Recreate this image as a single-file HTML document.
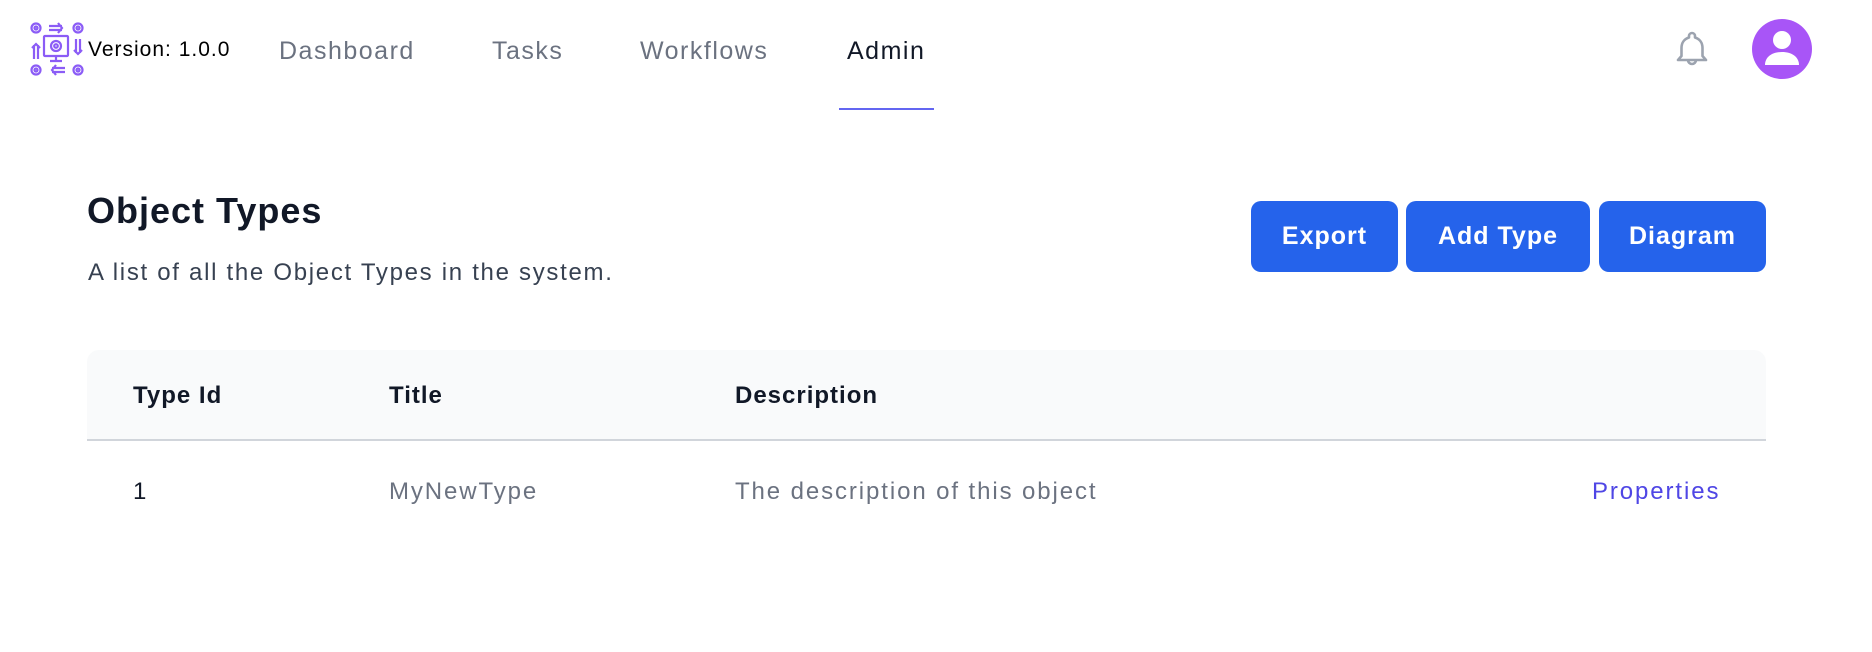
<!DOCTYPE html>
<html><head><meta charset="utf-8"><style>
*{margin:0;padding:0;box-sizing:border-box}
body{width:1872px;height:652px;background:#fff;font-family:"Liberation Sans",sans-serif;position:relative;overflow:hidden}
.a{position:absolute;white-space:nowrap}
.nav{font-size:25px;color:#6b7280;top:37px;letter-spacing:1.5px}
.btn{position:absolute;top:201px;height:71px;background:#2563eb;border-radius:10px;color:#fff;font-size:25px;font-weight:bold;display:flex;align-items:center;justify-content:center;letter-spacing:1px}
.th{font-size:24px;font-weight:bold;color:#111827;top:382px;letter-spacing:1px}
.td{font-size:24px;color:#6b7280;top:478px;letter-spacing:1.9px}
</style></head><body>
<svg class="a" style="left:29px;top:21px" width="56" height="56" viewBox="0 0 56 56" fill="none" stroke="#8b5cf6" stroke-width="2.2">
<circle cx="7" cy="7" r="4.5"/><circle cx="7" cy="7" r="1.5"/>
<circle cx="49" cy="7" r="4.5"/><circle cx="49" cy="7" r="1.5"/>
<circle cx="7" cy="49" r="4.5"/><circle cx="7" cy="49" r="1.5"/>
<circle cx="49" cy="49" r="4.5"/><circle cx="49" cy="49" r="1.5"/>
<path d="M20 5h13M20 9h13M29 2l4 5-4 5"/>
<path d="M23 47h13M23 51h13M27 44l-4 5 4 5"/>
<path d="M5 38V24M9 38V24M3 27l4-4 4 4"/>
<path d="M47 18v14M51 18v14M45 29l4 4 4-4"/>
<rect x="15" y="15" width="24" height="20" rx="1"/><path d="M27 35v5M21 40h12"/>
<circle cx="27" cy="25" r="5"/><circle cx="27" cy="25" r="1.8"/>
</svg>
<div class="a" style="left:88px;top:38px;font-size:21px;color:#000;letter-spacing:1px">Version: 1.0.0</div>
<div class="a nav" style="left:279px">Dashboard</div>
<div class="a nav" style="left:492px">Tasks</div>
<div class="a nav" style="left:640px">Workflows</div>
<div class="a nav" style="left:847px;color:#111827">Admin</div>
<div class="a" style="left:839px;top:108px;width:95px;height:2px;background:#6366f1"></div>
<svg class="a" style="left:1675px;top:30px" width="34" height="38" viewBox="0 0 34 38" fill="none" stroke="#9ca3af" stroke-width="2.6" stroke-linejoin="round">
<path d="M17 3a3 3 0 0 0-3 3v1.5C9 9 6.5 13 6.5 18v8L3 30h28l-3.5-4v-8c0-5-2.5-9-7.5-10.5V6a3 3 0 0 0-3-3z"/>
<path d="M13 30a4 4 0 0 0 8 0"/>
</svg>
<svg class="a" style="left:1752px;top:19px" width="60" height="60" viewBox="0 0 60 60">
<circle cx="30" cy="30" r="30" fill="#a855f7"/>
<circle cx="30" cy="21" r="9" fill="#fff"/>
<path d="M13 46c0-8 7-13 17-13s17 5 17 13z" fill="#fff"/>
</svg>
<div class="a" style="left:87px;top:190px;font-size:36px;font-weight:bold;color:#111827;letter-spacing:1px">Object Types</div>
<div class="a" style="left:88px;top:259px;font-size:24px;color:#374151;letter-spacing:1.7px">A list of all the Object Types in the system.</div>
<div class="btn" style="left:1251px;width:147px">Export</div>
<div class="btn" style="left:1406px;width:184px">Add Type</div>
<div class="btn" style="left:1599px;width:167px">Diagram</div>
<div class="a" style="left:87px;top:350px;width:1679px;height:91px;background:#f9fafb;border-radius:12px 12px 0 0;border-bottom:2px solid #d1d5db"></div>
<div class="a th" style="left:133px">Type Id</div>
<div class="a th" style="left:389px">Title</div>
<div class="a th" style="left:735px">Description</div>
<div class="a td" style="left:133px;color:#111827">1</div>
<div class="a td" style="left:389px">MyNewType</div>
<div class="a td" style="left:735px">The description of this object</div>
<div class="a td" style="left:1592px;color:#4f46e5">Properties</div>
</body></html>
